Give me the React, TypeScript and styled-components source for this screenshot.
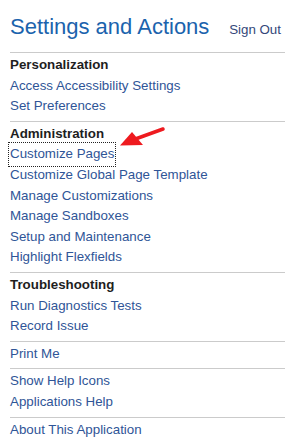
import React from 'react'
import styled, {createGlobalStyle} from 'styled-components'

const GlobalStyle = createGlobalStyle`
  body {
    margin: 0;
    background: #fff;
    font-family: "Liberation Sans", Arial, sans-serif;
  }
`

const Panel = styled.div`
  width: 295px;
  height: 444px;
  box-sizing: border-box;
  padding: 0 10px;
  position: relative;
  overflow: hidden;
  background: #fff;
`

const Header = styled.div`
  display: flex;
  align-items: baseline;
  justify-content: space-between;
  padding: 14px 4px 13px 0;
`

const Title = styled.h1`
  margin: 0;
  font-size: 22px;
  line-height: 25px;
  font-weight: normal;
  color: #1b63ad;
`

const SignOut = styled.a`
  font-size: 13.33px;
  color: #33477a;
  text-decoration: none;
`

const Section = styled.div`
  border-top: 1px solid #cbcbcb;
  padding: 2px 0 4px;
  display: flex;
  flex-direction: column;
  align-items: flex-start;
`

const SectionTitle = styled.div`
  font-size: 13.33px;
  line-height: 20.6px;
  font-weight: bold;
  color: #1e1e1e;
`

const Item = styled.a<{$focused?: boolean}>`
  font-size: 13.33px;
  line-height: 20.6px;
  color: #2f5597;
  text-decoration: none;
  outline: ${p => (p.$focused ? '1px dotted #222' : 'none')};
  outline-offset: 1px;
`

// red pointer drawn over the menu, aimed at "Customize Pages"
const Arrow = styled.svg`
  position: absolute;
  left: 114px;
  top: 124px;
`

const sections: {title?: string; items: string[]}[] = [
  {title: 'Personalization', items: ['Access Accessibility Settings', 'Set Preferences']},
  {
    title: 'Administration',
    items: [
      'Customize Pages',
      'Customize Global Page Template',
      'Manage Customizations',
      'Manage Sandboxes',
      'Setup and Maintenance',
      'Highlight Flexfields',
    ],
  },
  {title: 'Troubleshooting', items: ['Run Diagnostics Tests', 'Record Issue']},
  {items: ['Print Me']},
  {items: ['Show Help Icons', 'Applications Help']},
  {items: ['About This Application']},
]

export default function App() {
  return (
    <Panel>
      <GlobalStyle />
      <Header>
        <Title>Settings and Actions</Title>
        <SignOut href="#">Sign Out</SignOut>
      </Header>
      {sections.map((s, i) => (
        <Section key={i}>
          {s.title && <SectionTitle>{s.title}</SectionTitle>}
          {s.items.map(item => (
            <Item key={item} href="#" $focused={item === 'Customize Pages'}>
              {item}
            </Item>
          ))}
        </Section>
      ))}
      <Arrow width="54" height="28" viewBox="0 0 54 28">
        <line x1="49" y1="5" x2="20" y2="15.5" stroke="#ee1a1f" strokeWidth="3.5" strokeLinecap="round" />
        <polygon points="6,21.5 18,8 29,21" fill="#ee1a1f" />
      </Arrow>
    </Panel>
  )
}
